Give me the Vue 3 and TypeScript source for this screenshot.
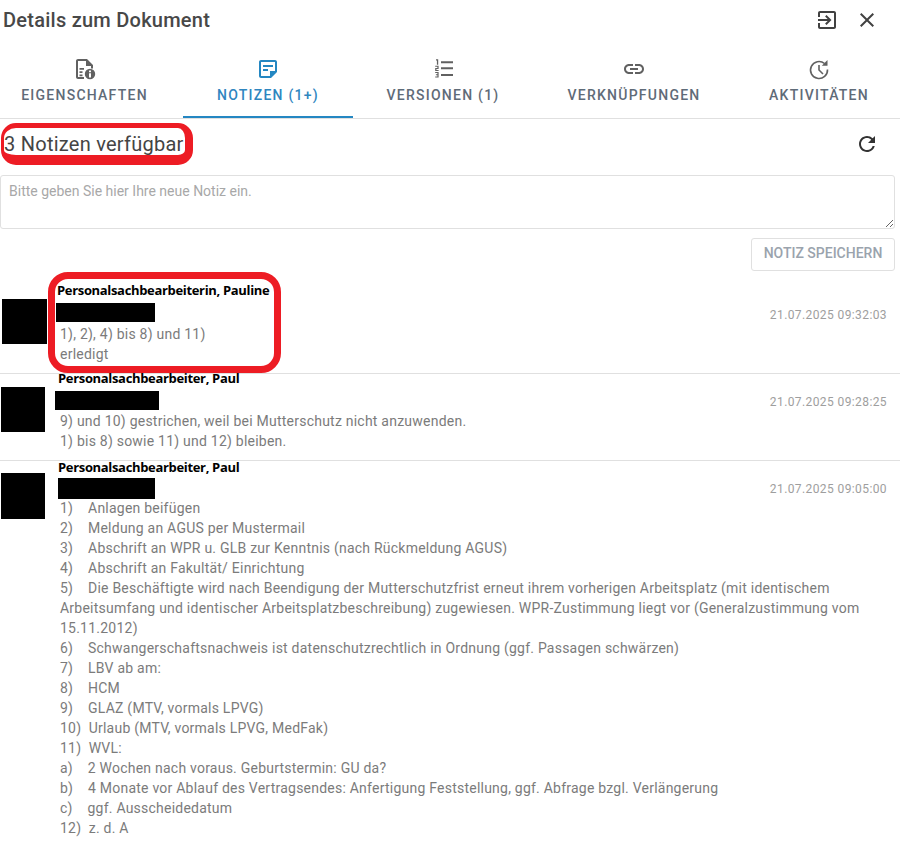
<script setup lang="ts">
interface Tab { label: string; icon: string; active?: boolean }
const tabs: Tab[] = [
  { label: 'EIGENSCHAFTEN', icon: 'info' },
  { label: 'NOTIZEN (1+)', icon: 'note', active: true },
  { label: 'VERSIONEN (1)', icon: 'list' },
  { label: 'VERKNÜPFUNGEN', icon: 'link' },
  { label: 'AKTIVITÄTEN', icon: 'history' },
]
const items: [string, string][] = [
  ['1)', 'Anlagen beifügen'],
  ['2)', 'Meldung an AGUS per Mustermail'],
  ['3)', 'Abschrift an WPR u. GLB zur Kenntnis (nach Rückmeldung AGUS)'],
  ['4)', 'Abschrift an Fakultät/ Einrichtung'],
  ['5)', 'Die Beschäftigte wird nach Beendigung der Mutterschutzfrist erneut ihrem vorherigen Arbeitsplatz (mit identischem Arbeitsumfang und identischer Arbeitsplatzbeschreibung) zugewiesen. WPR-Zustimmung liegt vor (Generalzustimmung vom 15.11.2012)'],
  ['6)', 'Schwangerschaftsnachweis ist datenschutzrechtlich in Ordnung (ggf. Passagen schwärzen)'],
  ['7)', 'LBV ab am:'],
  ['8)', 'HCM'],
  ['9)', 'GLAZ (MTV, vormals LPVG)'],
  ['10)', 'Urlaub (MTV, vormals LPVG, MedFak)'],
  ['11)', 'WVL:'],
  ['a)', '2 Wochen nach voraus. Geburtstermin: GU da?'],
  ['b)', '4 Monate vor Ablauf des Vertragsendes: Anfertigung Feststellung, ggf. Abfrage bzgl. Verlängerung'],
  ['c)', 'ggf. Ausscheidedatum'],
  ['12)', 'z. d. A'],
]
const lines: string[] = items.map(([n, t]) => n + ' '.repeat(n.length === 3 ? 2 : 4) + t)
</script>

<template>
  <div class="page">
    <header class="top">
      <h1>Details zum Dokument</h1>
      <div class="top-actions">
        <svg width="24" height="24" viewBox="0 0 24 24" fill="#424242"><path d="M10.09 15.59 11.5 17l5-5-5-5-1.41 1.41L12.67 11H3v2h9.67l-2.58 2.59zM19 3H5c-1.11 0-2 .9-2 2v4h2V5h14v14H5v-4H3v4c0 1.1.89 2 2 2h14c1.1 0 2-.9 2-2V5c0-1.1-.9-2-2-2z"/></svg>
        <svg width="24" height="24" viewBox="0 0 24 24" fill="#424242"><path d="M19 6.41 17.59 5 12 10.59 6.41 5 5 6.41 10.59 12 5 17.59 6.41 19 12 13.41 17.59 19 19 17.59 13.41 12z"/></svg>
      </div>
    </header>

    <nav class="tabs">
      <div v-for="t in tabs" :key="t.label" class="tab" :class="['tab-' + t.icon, { active: t.active }]">
        <svg v-if="t.icon === 'info'" width="24" height="24" viewBox="0 0 24 24" fill="currentColor">
          <path d="M5 2h9l6 6v3.6h-2V9h-5V4H5v16h6v2H5c-1.1 0-2-.9-2-2V4c0-1.1.9-2 2-2z"/>
          <path d="M6.5 11h4.5v1.8H6.5zM6.5 14.2h3v1.8h-3zM6.5 17.4h3v1.8h-3z"/>
          <path fill-rule="evenodd" d="M17 11.8a5.2 5.2 0 1 1 0 10.4 5.2 5.2 0 0 1 0-10.4zM16 13.6v1.7h2v-1.7zM16 16.2v4.2h2v-4.2z"/>
        </svg>
        <svg v-else-if="t.icon === 'note'" width="24" height="24" viewBox="0 0 24 24" fill="currentColor">
          <path d="M19 5v9h-5v5H5V5h14m0-2H5c-1.1 0-2 .9-2 2v14c0 1.1.9 2 2 2h10l6-6V5c0-1.1-.9-2-2-2zm-7 11H7v-2h5v2zm5-4H7V8h10v2z"/>
        </svg>
        <svg v-else-if="t.icon === 'list'" width="24" height="24" viewBox="0 0 24 24" fill="currentColor">
          <path d="M5 2.2h2.2v5.6H5.9V3.4H5zM4.2 8.8h3.4v3.2H5.4v1h2.2v1H4.2v-3.1h2.2v-1.1H4.2zM4.2 15h3.4v5.4H4.2v-1h2.2v-1.2H4.9v-1h1.5v-1.2H4.2z"/>
          <path d="M10 4.2h12v2H10zM10 10.2h12v2H10zM10 17h12v2H10z"/>
        </svg>
        <svg v-else-if="t.icon === 'link'" width="24" height="24" viewBox="0 0 24 24" fill="currentColor">
          <path d="M17 7h-4v2h4c1.65 0 3 1.35 3 3s-1.35 3-3 3h-4v2h4c2.76 0 5-2.24 5-5s-2.24-5-5-5zm-6 8H7c-1.65 0-3-1.35-3-3s1.35-3 3-3h4V7H7c-2.76 0-5 2.24-5 5s2.24 5 5 5h4v-2zm-3-4h8v2H8z"/>
        </svg>
        <svg v-else width="24" height="24" viewBox="0 0 24 24" fill="none" stroke="currentColor" stroke-width="1.6">
          <path d="M17.5 6.5A8.5 8.5 0 1 0 20.5 12.5"/>
          <path d="M12 8v5l4 4"/>
          <path d="M20.5 3v5.8h-5.7z" fill="currentColor" stroke="none"/>
        </svg>
        <span>{{ t.label }}</span>
      </div>
    </nav>

    <div class="count-row">
      <span class="count">3 Notizen verfügbar</span>
      <svg width="24" height="24" viewBox="0 0 24 24" fill="#333"><path d="M17.65 6.35A7.958 7.958 0 0 0 12 4c-4.42 0-7.99 3.58-7.99 8s3.57 8 7.99 8c3.73 0 6.84-2.55 7.73-6h-2.08A5.99 5.99 0 0 1 12 18c-3.31 0-6-2.69-6-6s2.69-6 6-6c1.66 0 3.14.69 4.22 1.78L13 11h7V4l-2.35 2.35z"/></svg>
    </div>

    <textarea class="input" placeholder="Bitte geben Sie hier Ihre neue Notiz ein."></textarea>
    <div class="save-row"><button class="save" disabled>NOTIZ SPEICHERN</button></div>

    <section class="note first">
      <div class="avatar a1"></div>
      <div class="body">
        <div class="name">Personalsachbearbeiterin, Pauline</div>
        <div class="redact r1"></div>
        <div class="line">1), 2), 4) bis 8) und 11)</div>
        <div class="line">erledigt</div>
      </div>
      <time>21.07.2025 09:32:03</time>
    </section>

    <section class="note second">
      <div class="avatar a2"></div>
      <div class="body">
        <div class="name">Personalsachbearbeiter, Paul</div>
        <div class="redact r2"></div>
        <div class="line">9) und 10) gestrichen, weil bei Mutterschutz nicht anzuwenden.</div>
        <div class="line">1) bis 8) sowie 11) und 12) bleiben.</div>
      </div>
      <time>21.07.2025 09:28:25</time>
    </section>

    <section class="note third">
      <div class="avatar a3"></div>
      <div class="body">
        <div class="name">Personalsachbearbeiter, Paul</div>
        <div class="redact r3"></div>
        <div v-for="l in lines" :key="l" class="line wide">{{ l }}</div>
      </div>
      <time>21.07.2025 09:05:00</time>
    </section>

    <div class="mark mark-count"></div>
    <div class="mark mark-note"></div>
  </div>
</template>

<style scoped>
.page {
  position: relative;
  width: 900px;
  height: 862px;
  overflow: hidden;
  background: #fff;
  font-family: Roboto, "Liberation Sans", sans-serif;
  color: #424242;
}
.top {
  height: 40px;
  display: flex;
  align-items: center;
  justify-content: space-between;
  padding: 0 21px 0 3px;
}
h1 {
  margin: 0;
  font-size: 20px;
  font-weight: 500;
  letter-spacing: 0.25px;
  color: #484848;
}
.top-actions { display: flex; gap: 16px; }
.tabs {
  display: grid;
  grid-template-columns: 183px 170px 180px 202px 165px;
  height: 78px;
  border-bottom: 1px solid #e0e0e0;
}
.tab {
  display: flex;
  flex-direction: column;
  align-items: center;
  padding-top: 17px;
  box-sizing: border-box;
  color: #616161;
  font-size: 14px;
  font-weight: 500;
  letter-spacing: 1.25px;
  gap: 6px;
}
.tab-info { padding-right: 14px; }
.tab-history { padding-left: 3px; }
.tab span { color: #5f6b78; line-height: 16px; }
.tab.active { color: #2487c2; border-bottom: 2px solid #2487c2; }
.tab.active span { color: #2f86bf; }
.count-row {
  height: 49px;
  display: flex;
  align-items: center;
  justify-content: space-between;
  padding: 0 21px 0 4px;
}
.count { font-size: 20px; letter-spacing: 0.25px; color: #444; }
.input {
  display: block;
  box-sizing: border-box;
  width: 895px;
  height: 54px;
  margin: 7px 0 0;
  padding: 5px 8px;
  border: 1px solid #e0e0e0;
  border-radius: 3px;
  font: 14px/20px Roboto, sans-serif;
  outline: none;
}
.input::placeholder { color: #a8a8a8; opacity: 1; }
.save-row { display: flex; justify-content: flex-end; padding: 9px 5px 0 0; }
.save {
  width: 144px;
  height: 33px;
  padding: 0 0 3px;
  background: #fff;
  border: 1px solid #e0e0e0;
  border-radius: 3px;
  color: #9aa3ad;
  font: 500 14px Roboto, sans-serif;
}
.note { display: flex; align-items: flex-start; border-top: 1px solid #e0e0e0; position: relative; }
.note.first { border-top: 0; height: 94px; margin-top: 8px; }
.note.second { height: 86px; }
.avatar { background: #000; flex: none; }
.a1 { width: 45px; height: 45px; margin: 20px 0 0 2px; }
.a2 { width: 44px; height: 45px; margin: 13px 0 0 1px; }
.a3 { width: 44px; height: 46px; margin: 12px 0 0 1px; }
.body { flex: 1; min-width: 0; padding-left: 13px; }
.note.first .body { padding-left: 10px; }
.name {
  font: 700 13px/16px "Open Sans", "DejaVu Sans", sans-serif;
  letter-spacing: -0.33px;
  color: #000;
  height: 16px;
  white-space: nowrap;
}
.note.first .name { margin-top: 3px; }
.note.second .name { margin-top: -4px; }
.note.third .name { margin-top: -2px; }
.redact { background: #000; }
.r1 { width: 99px; height: 19px; margin: 5px 0 2px -1px; }
.r2 { width: 104px; height: 19px; margin: 5px 0 1px -3px; }
.r3 { width: 97px; height: 21px; margin: 3px 0 -1px 0; }
.line {
  font-size: 14px;
  line-height: 20px;
  color: #7b7b7b;
  padding-left: 2px;
  letter-spacing: 0.23px;
}
.note.first .line { padding-left: 3px; }
.line.wide { width: 815px; white-space: pre-wrap; }
time {
  position: absolute;
  right: 13px;
  top: 28px;
  font-size: 12px;
  line-height: 16px;
  letter-spacing: 0.4px;
  color: #9e9e9e;
}
.note.second time { top: 20px; }
.note.third time { top: 20px; }
.mark {
  position: absolute;
  box-sizing: border-box;
  border: 7px solid #ed1c24;
  pointer-events: none;
}
.mark-count { left: 1px; top: 123px; width: 192px; height: 42px; border-width: 5px 8px 10px 3px; border-radius: 15px; }
.mark-note { left: 48px; top: 272px; width: 233px; height: 101px; border-radius: 20px; }
</style>
